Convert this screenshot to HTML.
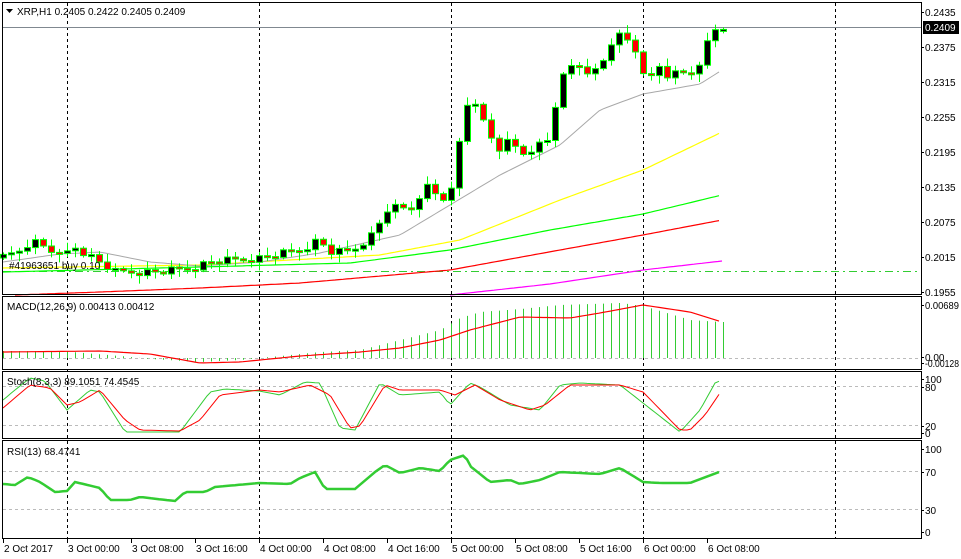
<!DOCTYPE html>
<html><head><meta charset="utf-8"><style>
html,body{margin:0;padding:0;background:#fff;width:961px;height:559px;overflow:hidden}
svg{display:block;font-family:"Liberation Sans",sans-serif;font-size:10px}
</style></head><body>
<svg id="s" width="961" height="559" xmlns="http://www.w3.org/2000/svg">
<rect width="961" height="559" fill="#fff"/>
<g id="grid"></g>
<g id="plot"></g>
<g stroke="#000" fill="none" stroke-width="1">
<rect x="2.5" y="2.5" width="919" height="292"/>
<rect x="2.5" y="296.5" width="919" height="73"/>
<rect x="2.5" y="371.5" width="919" height="67"/>
<rect x="2.5" y="440.5" width="919" height="98"/>
</g>
<g fill="#000">
<path d="M6 9h7l-3.5 4z"/>
<text x="17" y="15">XRP,H1  0.2405 0.2422 0.2405 0.2409</text>
<text x="7" y="310">MACD(12,26,9) 0.00413 0.00412</text>
<text x="7" y="385">Stoch(8,3,3) 89.1051 74.4545</text>
<text x="7" y="455">RSI(13) 68.4741</text>
<text x="9" y="269">#41963651 buy 0.10</text>
</g>
<g id="axis" fill="#000"></g>
<rect x="923" y="21" width="36" height="13" fill="#000"/>
<text x="925" y="31" fill="#fff">0.2409</text>
</svg>
<script>
(function(){
var NS="http://www.w3.org/2000/svg",P=document.getElementById('plot'),G=document.getElementById('grid'),A=document.getElementById('axis');
function el(p,t,a,txt){var e=document.createElementNS(NS,t);for(var k in a)e.setAttribute(k,a[k]);if(txt)e.textContent=txt;p.appendChild(e);return e;}
function interp(kp,x){for(var i=0;i<kp.length-1;i++){if(x<=kp[i+1][0]){var a=kp[i],b=kp[i+1];return a[1]+(b[1]-a[1])*(x-a[0])/(b[0]-a[0]);}}return kp[kp.length-1][1];}
function line(kp,col,w,x0,x1,dash){var pts=[];for(var x=x0;x<=x1;x+=4)pts.push(x+','+interp(kp,x).toFixed(1));el(P,'polyline',{points:pts.join(' '),fill:'none',stroke:col,'stroke-width':w||1,'stroke-dasharray':dash||''});}
[67,259,451,643,835].forEach(function(x){el(G,'line',{x1:x+.5,y1:3,x2:x+.5,y2:538,stroke:'#000','stroke-dasharray':'3,3'});});
[358,386,425,471,509].forEach(function(v){el(G,'line',{x1:3,y1:v+.5,x2:921,y2:v+.5,stroke:'#bbb','stroke-dasharray':'3,3'});});
el(G,'line',{x1:3,y1:27.5,x2:921,y2:27.5,stroke:'#808890'});
el(G,'line',{x1:3,y1:271.5,x2:921,y2:271.5,stroke:'#32cd32','stroke-dasharray':'8,4,2,4'});
line([[3,295],[15,295],[100,292],[200,288],[300,283],[450,270],[560,250],[643,235],[722,220]],'#f00',1.2,15,722);
line([[450,295],[550,284],[643,270],[722,261]],'#f0f',1.2,450,722);
line([[3,272],[200,267],[350,263],[450,250],[550,230],[643,214],[722,195]],'#0f0',1.2,3,722);
line([[3,268],[200,265],[380,255],[460,240],[560,200],[643,170],[722,132]],'#ff0',1.2,3,722);
line([[3,262],[60,254],[100,252],[150,262],[200,266],[260,262],[320,253],[400,235],[450,205],[500,175],[560,145],[600,110],[643,94],[700,84],[722,70]],'#a8a8a8',1,3,722);
var ck=[[3,258],[19,250],[27,244],[35,242],[51,250],[59,257],[75,247],[99,262],[115,272],[160,272],[190,268],[210,262],[260,258],[300,250],[318,240],[330,252],[350,252],[365,240],[375,232],[385,210],[395,208],[410,210],[425,185],[440,198],[450,198],[458,148],[466,105],[474,98],[484,125],[492,140],[500,150],[510,140],[520,155],[532,148],[548,140],[556,100],[566,68],[578,65],[590,72],[600,70],[608,45],[614,40],[620,36],[628,42],[636,52],[643,70],[651,78],[660,65],[668,77],[676,74],[690,74],[698,64],[706,45],[714,30],[723,27]];
var prev=258;
for(var i=0;i<=90;i++){var x=3+8*i;var c=interp(ck,x)+((i*37)%7-3)*1.2;var o=prev;prev=c;
var tp=Math.min(o,c),bt=Math.max(o,c);if(bt-tp<2){bt=tp+2;}
var hi=tp-2-((i*13)%5)*1.5,lo=bt+2+((i*17)%5)*1.5;
el(P,'line',{x1:x+.5,y1:hi,x2:x+.5,y2:lo,stroke:'#0f0'});
el(P,'rect',{x:x-2.5,y:tp,width:6,height:bt-tp,fill:c<o?'#000':'#f00',stroke:'#0f0'});}
var hk=[[3,351],[60,351],[120,356],[150,359],[200,362],[240,360],[280,356],[320,352],[360,350],[400,340],[440,330],[460,318],[480,312],[520,309],[560,305],[620,303],[643,306],[690,320],[722,322]];
for(var x2=3;x2<=723;x2+=8){var v=interp(hk,x2);el(P,'line',{x1:x2+.5,y1:Math.min(v,358),x2:x2+.5,y2:Math.max(v,358),stroke:'#3c3'});}
line([[3,352],[100,351],[150,354],[200,363],[240,362],[300,356],[360,352],[400,348],[440,340],[470,330],[520,317],[570,318],[600,313],[643,305],[690,312],[722,322]],'#f00',1.2,3,722);
line([[3,400],[15,390],[30,378],[45,381],[67,410],[90,390],[100,392],[125,432],[180,432],[210,392],[225,389],[259,391],[280,395],[305,382],[320,383],[340,428],[355,430],[380,383],[400,395],[440,392],[450,405],[470,383],[480,387],[510,405],[540,410],[560,385],[580,383],[620,385],[643,403],[680,432],[700,410],[715,383],[722,380]],'#3c3',1,3,722);
line([[3,408],[30,385],[50,388],[67,405],[80,402],[100,390],[125,420],[140,430],[180,431],[200,420],[220,395],[259,390],[280,392],[310,385],[330,395],[350,428],[360,426],[385,385],[400,390],[440,390],[455,395],[475,385],[500,400],[530,410],[545,405],[570,385],[620,385],[643,392],[680,430],[690,430],[705,415],[722,390]],'#f00',1,3,722);
line([[3,484],[15,485],[28,477],[40,482],[55,492],[67,491],[75,482],[100,488],[110,500],[130,500],[140,497],[175,501],[185,492],[205,492],[215,487],[259,483],[290,484],[300,478],[315,472],[325,489],[355,489],[375,472],[385,465],[400,473],[420,468],[440,471],[450,460],[465,455],[470,466],[490,482],[510,480],[520,484],[540,480],[560,472],[580,473],[600,474],[620,468],[643,482],[660,483],[690,483],[722,471]],'#3c3',2.5,3,722);
[['0.2435',12],['0.2375',47],['0.2315',82],['0.2255',117],['0.2195',152],['0.2135',187],['0.2075',222],['0.2015',257],['0.1955',292],['0.00689',305],['0.00',357],['-0.00128',363],['100',379],['80',387],['20',426],['0',433],['100',449],['70',472],['30',510],['0',532]].forEach(function(a){var at={x:925,y:a[1]+4};if(a[0].length>6){at.textLength=34;at.lengthAdjust='spacingAndGlyphs';}el(A,'text',at,a[0]);el(A,'line',{x1:921,y1:a[1]+.5,x2:924,y2:a[1]+.5,stroke:'#000'});});
[['2 Oct 2017',3],['3 Oct 00:00',67],['3 Oct 08:00',131],['3 Oct 16:00',195],['4 Oct 00:00',259],['4 Oct 08:00',323],['4 Oct 16:00',387],['5 Oct 00:00',451],['5 Oct 08:00',515],['5 Oct 16:00',579],['6 Oct 00:00',643],['6 Oct 08:00',707]].forEach(function(a){el(A,'text',{x:a[1]+1,y:552},a[0]);el(A,'line',{x1:a[1]+.5,y1:538,x2:a[1]+.5,y2:543,stroke:'#000'});});
})();
</script>
</body></html>
